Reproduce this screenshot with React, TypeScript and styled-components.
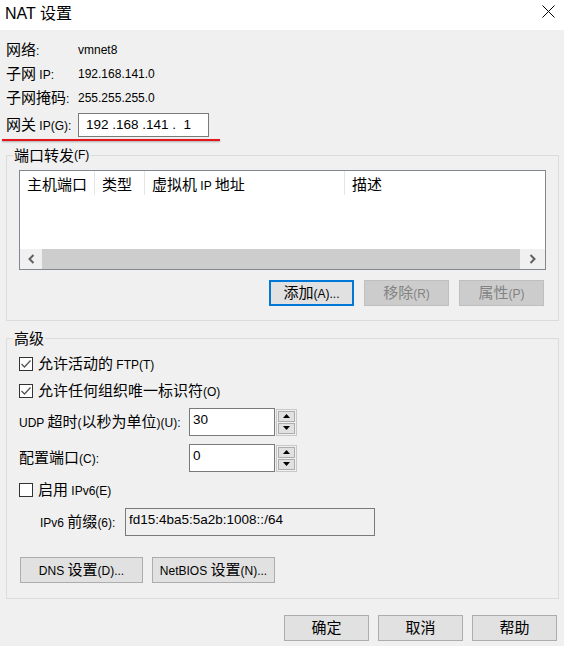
import React from 'react';
import styled, { createGlobalStyle } from 'styled-components';

const GlobalStyle = createGlobalStyle`
  html, body {
    margin: 0;
    padding: 0;
    background: #f0f0f0;
  }
  body {
    font-family: "Liberation Sans", "Noto Sans CJK SC", sans-serif;
    font-size: 12px;
    color: #000;
  }
  * {
    box-sizing: border-box;
  }
`;

const Window = styled.div`
  width: 564px;
  height: 646px;
  display: flex;
  flex-direction: column;
  background: #f0f0f0;
  overflow: hidden;
`;

const TitleBar = styled.div`
  height: 30px;
  flex-shrink: 0;
  background: #fff;
  display: flex;
  align-items: flex-start;
  justify-content: space-between;
  padding: 0 9px 0 5px;
`;

const Title = styled.div`
  margin-top: 3px;
  font-size: 16px;
  line-height: 18px;
`;

const Close = styled.svg`
  margin-top: 5px;
`;

const Body = styled.div`
  display: flex;
  flex-direction: column;
  padding: 8px 5px 0 6px;
`;

const Han = styled.span<{ $size?: number }>`
  font-family: "Noto Sans CJK SC", sans-serif;
  font-size: ${p => p.$size ?? 15}px;
`;

const CJK = /([\u2e80-\u9fff\uf900-\ufaff\uff00-\uffef]+)/;

function mix(s: string, size?: number) {
  return s.split(CJK).map((part, i) =>
    CJK.test(part) ? <Han key={i} $size={size}>{part}</Han> : <React.Fragment key={i}>{part}</React.Fragment>
  );
}

const InfoRow = styled.div`
  display: flex;
  align-items: center;
  height: 24px;
  line-height: 18px;
`;

const InfoLabel = styled.div`
  width: 72px;
  flex-shrink: 0;
`;

const GatewayRow = styled(InfoRow)`
  height: 26px;
  margin-top: 2px;
`;

const IpBox = styled.div`
  width: 131px;
  height: 24px;
  background: #fff;
  border: 1px solid #7a7a7a;
  padding-left: 7px;
  font-size: 13.5px;
  line-height: 22px;
  white-space: pre;
`;

const RedLine = styled.div`
  width: 218px;
  height: 2px;
  margin: 1px 0 0 -4px;
  background: #e3171c;
  box-shadow: 0 1px 2px rgba(0, 0, 0, 0.3);
`;

const Group = styled.fieldset<{ $top: number }>`
  margin: ${p => p.$top}px 0 0 0;
  border: 1px solid #dcdcdc;
  min-width: 0;
`;

const PortGroup = styled(Group)`
  padding: 7px 12px 14px 12px;
`;

const AdvGroup = styled(Group)`
  padding: 8px 12px 15px 12px;
  display: flex;
  flex-direction: column;
`;

const Legend = styled.legend`
  margin-left: -6px;
  padding: 0 1px;
  height: 16px;
  line-height: 16px;
  display: flex;
  align-items: center;
`;

const ListBox = styled.div`
  height: 100px;
  background: #fff;
  border: 1px solid #828790;
  display: flex;
  flex-direction: column;
`;

const ListHeader = styled.div`
  display: flex;
  height: 24px;
  flex-shrink: 0;
`;

const HeadCell = styled.div<{ $w?: number }>`
  ${p => (p.$w ? `width: ${p.$w}px;` : 'flex: 1;')}
  flex-shrink: 0;
  padding-left: 7px;
  height: 24px;
  display: flex;
  align-items: center;
  border-right: 1px solid #e5e5e5;
  white-space: pre;
  &:last-child {
    border-right: none;
  }
`;

const ListSpace = styled.div`
  flex: 1;
`;

const ScrollBar = styled.div`
  height: 20px;
  display: flex;
  flex-shrink: 0;
`;

const ScrollBtn = styled.div<{ $w: number }>`
  width: ${p => p.$w}px;
  background: #f0f0f0;
  display: flex;
  align-items: center;
  justify-content: center;
`;

const ScrollThumb = styled.div`
  flex: 1;
  background: #cdcdcd;
`;

const ButtonRow = styled.div<{ $gap: number }>`
  display: flex;
  justify-content: flex-end;
  gap: ${p => p.$gap}px;
`;

const PortButtons = styled(ButtonRow)`
  margin-top: 10px;
  padding-right: 2px;
`;

const Button = styled.button<{ $w: number; $focus?: boolean }>`
  width: ${p => p.$w}px;
  height: 26px;
  flex-shrink: 0;
  padding: 0;
  font-family: inherit;
  font-size: 12px;
  line-height: 18px;
  color: #000;
  background: #e1e1e1;
  border: ${p => (p.$focus ? '2px solid #0078d7' : '1px solid #adadad')};
  &:disabled {
    background: #cccccc;
    border-color: #bfbfbf;
    color: #838383;
  }
`;

const CheckRow = styled.label<{ $top: number }>`
  display: flex;
  align-items: center;
  height: 20px;
  flex-shrink: 0;
  margin-top: ${p => p.$top}px;
  line-height: 18px;
`;

const CheckBox = styled.span`
  width: 14px;
  height: 14px;
  margin-right: 5px;
  background: #fff;
  border: 1px solid #333;
  display: flex;
  align-items: center;
  justify-content: center;
`;

const FieldRow = styled.div<{ $top: number }>`
  display: flex;
  align-items: center;
  height: 28px;
  flex-shrink: 0;
  margin-top: ${p => p.$top}px;
  line-height: 18px;
`;

const FieldLabel = styled.div<{ $w: number; $indent?: number }>`
  width: ${p => p.$w}px;
  padding-left: ${p => p.$indent ?? 0}px;
  flex-shrink: 0;
`;

const TextBox = styled.div<{ $w: number; $disabled?: boolean }>`
  width: ${p => p.$w}px;
  height: 28px;
  background: ${p => (p.$disabled ? '#f0f0f0' : '#fff')};
  border: 1px solid #7a7a7a;
  padding: 2px 3px;
  font-size: 13.5px;
  line-height: 18px;
`;

const Spinner = styled.div`
  width: 21px;
  height: 27px;
  margin-left: 1px;
  border: 1px solid #c8c8c8;
  padding: 1px;
  display: flex;
  flex-direction: column;
  gap: 1px;
`;

const SpinBtn = styled.div`
  flex: 1;
  background: #e1e1e1;
  border: 1px solid #adadad;
  display: flex;
  align-items: center;
  justify-content: center;
`;

const AdvButtons = styled.div`
  display: flex;
  height: 26px;
  gap: 9px;
  margin: 21px 0 0 1px;
`;

const FooterButtons = styled(ButtonRow)`
  height: 26px;
  margin-top: 16px;
  padding-right: 2px;
`;

const Tick = () => (
  <svg width="12" height="12" viewBox="0 0 12 12">
    <polyline points="1.5,6 4.5,9 10.5,2.5" fill="none" stroke="#555" strokeWidth="1.3" />
  </svg>
);

const Arrow = ({ up }: { up: boolean }) => (
  <svg width="7" height="4" viewBox="0 0 7 4">
    <polygon points={up ? '3.5,0 7,4 0,4' : '0,0 7,0 3.5,4'} fill="#000" />
  </svg>
);

const Chevron = ({ left }: { left: boolean }) => (
  <svg width="7" height="10" viewBox="0 0 7 10">
    <polyline
      points={left ? '5.5,1 1.5,5 5.5,9' : '1.5,1 5.5,5 1.5,9'}
      fill="none"
      stroke="#606060"
      strokeWidth="2"
    />
  </svg>
);

const Check = ({ checked, text, top }: { checked: boolean; text: string; top: number }) => (
  <CheckRow $top={top}>
    <CheckBox>{checked && <Tick />}</CheckBox>
    <span>{mix(text)}</span>
  </CheckRow>
);

const Spin = ({ label, value, top }: { label: string; value: string; top: number }) => (
  <FieldRow $top={top}>
    <FieldLabel $w={170}>{mix(label)}</FieldLabel>
    <TextBox $w={86}>{value}</TextBox>
    <Spinner>
      <SpinBtn><Arrow up /></SpinBtn>
      <SpinBtn><Arrow up={false} /></SpinBtn>
    </Spinner>
  </FieldRow>
);

const columns = [
  { title: '主机端口', w: 75 },
  { title: '类型', w: 50 },
  { title: '虚拟机 IP 地址', w: 200 },
  { title: '描述' },
];

export default function App() {
  return (
    <Window>
      <GlobalStyle />
      <TitleBar>
        <Title>{mix('NAT 设置', 16)}</Title>
        <Close width="13" height="13" viewBox="0 0 13 13">
          <path d="M0.5 0.5 L12.5 12.5 M12.5 0.5 L0.5 12.5" stroke="#000" strokeWidth="1" />
        </Close>
      </TitleBar>

      <Body>
        <InfoRow>
          <InfoLabel>{mix('网络:')}</InfoLabel>
          <span>vmnet8</span>
        </InfoRow>
        <InfoRow>
          <InfoLabel>{mix('子网 IP:')}</InfoLabel>
          <span>192.168.141.0</span>
        </InfoRow>
        <InfoRow>
          <InfoLabel>{mix('子网掩码:')}</InfoLabel>
          <span>255.255.255.0</span>
        </InfoRow>
        <GatewayRow>
          <InfoLabel>{mix('网关 IP(G):')}</InfoLabel>
          <IpBox>{'192 .168 .141 .  1'}</IpBox>
        </GatewayRow>
        <RedLine />

        <PortGroup $top={6}>
          <Legend>{mix('端口转发(F)')}</Legend>
          <ListBox>
            <ListHeader>
              {columns.map(c => (
                <HeadCell key={c.title} $w={c.w}>
                  <span>{mix(c.title)}</span>
                </HeadCell>
              ))}
            </ListHeader>
            <ListSpace />
            <ScrollBar>
              <ScrollBtn $w={22}><Chevron left /></ScrollBtn>
              <ScrollThumb />
              <ScrollBtn $w={25}><Chevron left={false} /></ScrollBtn>
            </ScrollBar>
          </ListBox>
          <PortButtons $gap={10}>
            <Button $w={85} $focus>{mix('添加(A)...')}</Button>
            <Button $w={85} disabled>{mix('移除(R)')}</Button>
            <Button $w={85} disabled>{mix('属性(P)')}</Button>
          </PortButtons>
        </PortGroup>

        <AdvGroup $top={9}>
          <Legend>{mix('高级')}</Legend>
          <Check checked text="允许活动的 FTP(T)" top={0} />
          <Check checked text="允许任何组织唯一标识符(O)" top={7} />
          <Spin label="UDP 超时(以秒为单位)(U):" value="30" top={7} />
          <Spin label="配置端口(C):" value="0" top={8} />
          <Check checked={false} text="启用 IPv6(E)" top={8} />
          <FieldRow $top={8}>
            <FieldLabel $w={106} $indent={21}>{mix('IPv6 前缀(6):')}</FieldLabel>
            <TextBox $w={250} $disabled>fd15:4ba5:5a2b:1008::/64</TextBox>
          </FieldRow>
          <AdvButtons>
            <Button $w={123}>{mix('DNS 设置(D)...')}</Button>
            <Button $w={123}>{mix('NetBIOS 设置(N)...')}</Button>
          </AdvButtons>
        </AdvGroup>

        <FooterButtons $gap={9}>
          <Button $w={85}>{mix('确定')}</Button>
          <Button $w={85}>{mix('取消')}</Button>
          <Button $w={85}>{mix('帮助')}</Button>
        </FooterButtons>
      </Body>
    </Window>
  );
}
